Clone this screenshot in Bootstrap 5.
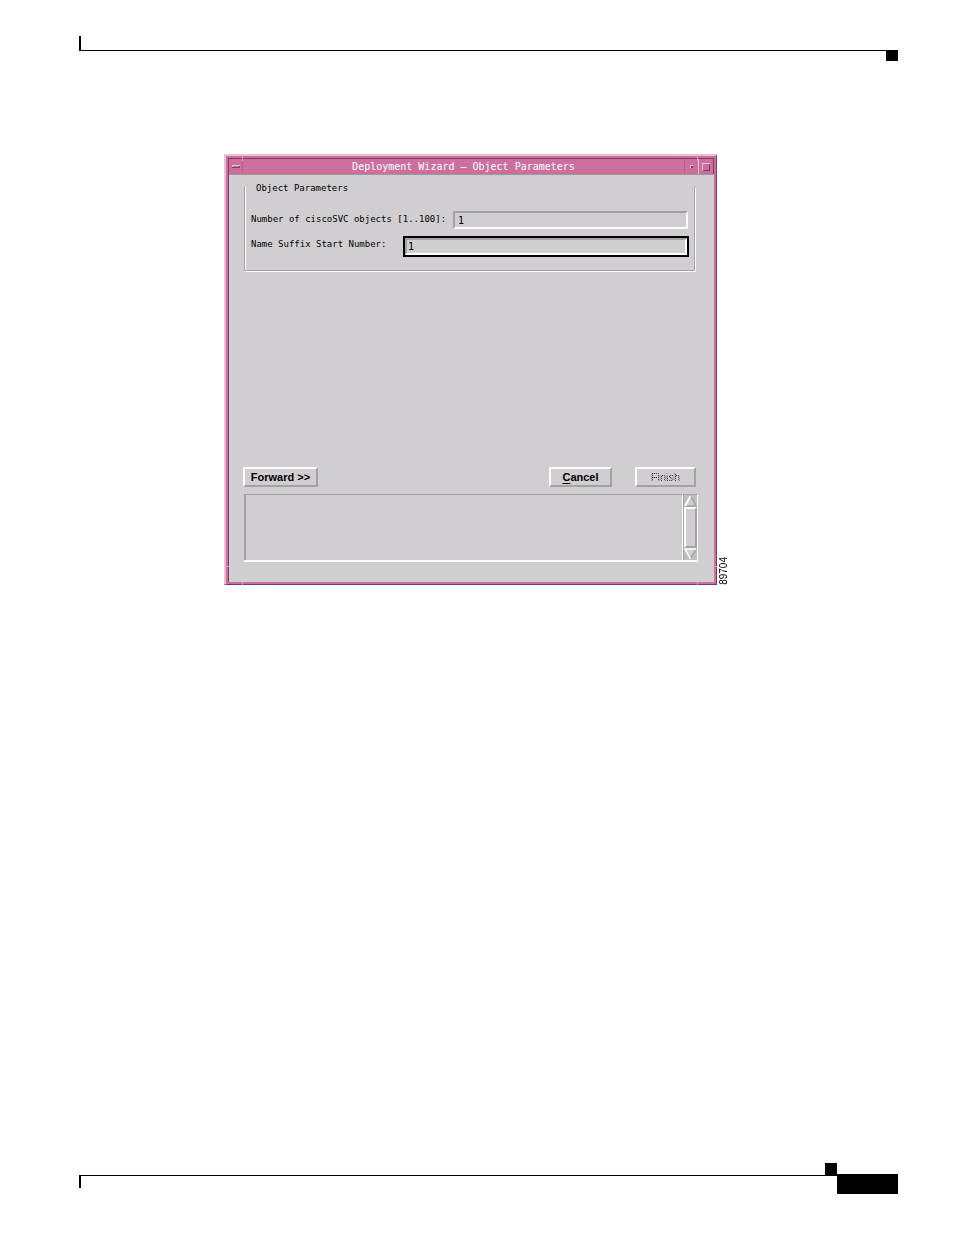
<!DOCTYPE html>
<html lang="en">
<head>
<meta charset="utf-8">
<meta name="viewport" content="width=device-width, initial-scale=1">
<title>Deployment Wizard - Object Parameters</title>
<link href="https://cdn.jsdelivr.net/npm/bootstrap@5.3.0/dist/css/bootstrap.min.css" rel="stylesheet">
<style>
:root{--face:#d1ced1;--lo:#a3a1a3;--hi:#fff;--pink:#cc6f9e;--pink-hi:#e9c0d7;--pink-lo:#7d3c60}
body{background:#fff;color:#000;font-family:"Liberation Sans",Arial,sans-serif}
.sheet{padding:36px 56px 41px 79px}
/* page rules */
.rule-top{height:25px}
.rule-top .tick-line{height:15px;border-left:2px solid #000;border-bottom:1px solid #000}
.block-top{width:12px;height:11px;background:#000}
.rule-foot{height:31px}
.rule-foot .tick-line{height:13px;border-left:2px solid #000;border-top:1px solid #000}
.block-foot{width:12px;height:12px;background:#000}
.page-box{width:61px;height:20px;background:#000}
/* window frame */
.figure-row{padding:93px 168px 0 145px}
.win{border:solid;border-width:2px 1px 1px 2px;border-color:var(--pink-hi) var(--pink-lo) var(--pink-lo) var(--pink-hi);background:var(--pink)}
.win-inner{margin:2px;border-top:1px solid var(--pink-lo);border-left:1px solid var(--pink-lo)}
.win-title{height:16px;border-bottom:1px solid #999;color:#fff;font:10px/15px "DejaVu Sans Mono",monospace}
.win-title h1{font:inherit;line-height:15px}
.tool{height:15px;width:16px;padding:0;border:0;background:none;display:flex;align-items:center;justify-content:center}
.tool-menu{width:14px;border-right:1px solid #b0658c}
.tool-min{border-left:1px solid #b0658c;width:14px}
.tool-max{border-left:1px solid var(--pink-hi);border-right:1px solid var(--pink-lo)}
.notch{position:absolute;background:#dba0c0}
.notch-v{width:1px;height:5px}
.notch-h{width:4px;height:1px}
.win-body{background:var(--face);min-height:407px;padding:12px 16px 20px 14px}
/* parameters */
.mono{font:9px/14px "DejaVu Sans Mono",monospace}
.group{position:relative;height:84px;border:solid var(--lo);border-width:0 1px 1px;margin:0 3px 0 1px;padding:24px 6px 0 6px;box-shadow:1px 1px 0 #fff,inset 1px 0 0 #fff}
.group-name{position:absolute;left:11px;top:-6px;width:auto;margin:0}
.entry{min-width:0;height:18px;padding:0 3px;border:2px solid;border-color:var(--lo) #fff #fff var(--lo);border-radius:0;background:var(--face);color:#000;font:10px/14px "DejaVu Sans Mono",monospace;outline:0}
.entry-focus{border:2px solid #000;height:21px;display:flex;margin-right:-1px}
.entry-focus .entry{flex:1;height:17px;padding:0 1px}
.row-one{height:18px}
.row-two{height:21px;margin-top:7px}
.row-one label,.row-two label{line-height:16px}
.label-one{width:202px}
.label-two{width:152px}
/* buttons */
.push{height:20px;border:2px solid;border-color:#fff var(--lo) var(--lo) #fff;border-radius:0;background:var(--face);color:#000;padding:0;font:bold 11px/16px "Liberation Sans",Arial,sans-serif}
.push-forward{width:75px}
.push-cancel{width:63px;margin-right:23px}
.push-cancel u{text-underline-offset:2px;text-decoration-thickness:1px}
.push-finish{width:61px}
.push-finish span{color:transparent;background:repeating-conic-gradient(#111 0 25%,#aaa 0 50%) 0 0/2px 2px;-webkit-background-clip:text;background-clip:text;font-weight:normal}
.actions{margin-right:2px}
/* message area */
.log{margin:7px 0 0 1px;height:68px;border-bottom:2px solid #fff}
.log textarea{resize:none;overflow:hidden;border:solid;border-width:1px 1px 0 2px;border-color:var(--lo) #fff #fff var(--lo);border-radius:0;background:var(--face);padding:2px;outline:0;font:10px/14px "DejaVu Sans Mono",monospace}
.scroll{width:15px;border-right:1px solid #fff;border-left:1px solid var(--lo);border-top:1px solid var(--lo);background:#bfbdbf}
.scroll button{border:0;padding:0;background:none;height:12px;display:block}
.scroll svg,.tool svg{display:block}
.thumb{border:solid;border-width:2px;border-color:#fff var(--lo) var(--lo) #fff;background:var(--face)}
.art-no{writing-mode:vertical-rl;transform:rotate(180deg);font-size:10px;line-height:12px;margin-left:1px}
</style>
</head>
<body>
<div class="sheet d-flex flex-column min-vh-100">
  <header class="rule-top d-flex">
    <div class="tick-line flex-grow-1"></div>
    <div class="block-top align-self-end"></div>
  </header>

  <main class="figure-row d-flex align-items-end">
    <section class="win position-relative flex-grow-1">
      <div class="win-inner">
        <div class="win-title d-flex">
          <button class="tool tool-menu" type="button" aria-label="Window menu"><svg width="8" height="3"><path d="M0 0h8v1H1v2H0z" fill="#e9c0d7"/><path d="M0 2h7V1h1v2H0z" fill="#7d3c60"/></svg></button>
          <h1 class="flex-grow-1 text-center m-0">Deployment Wizard — Object Parameters</h1>
          <button class="tool tool-min" type="button" aria-label="Minimize"><svg width="3" height="3"><path d="M0 0h3v1H1v2H0z" fill="#e9c0d7"/><path d="M1 1h2v2H1z" fill="#7d3c60"/></svg></button>
          <button class="tool tool-max" type="button" aria-label="Maximize"><svg width="8" height="8"><path d="M0 8V0h8v1H1v7z" fill="#e9c0d7"/><path d="M1 7h6V1h1v7H1z" fill="#7d3c60"/></svg></button>
        </div>
        <form class="win-body d-flex flex-column">
          <fieldset class="group mono">
            <legend class="group-name mono">Object Parameters</legend>
            <div class="row-one d-flex">
              <label class="label-one text-nowrap" for="count">Number of ciscoSVC objects [1..100]:</label>
              <input class="entry flex-grow-1" id="count" type="text" value="1">
            </div>
            <div class="row-two d-flex">
              <label class="label-two text-nowrap" for="suffix">Name Suffix Start Number:</label>
              <div class="entry-focus flex-grow-1"><input class="entry" id="suffix" type="text" value="1"></div>
            </div>
          </fieldset>
          <div class="actions d-flex mt-auto">
            <button class="push push-forward me-auto" type="button">Forward &gt;&gt;</button>
            <button class="push push-cancel" type="button"><u>C</u>ancel</button>
            <button class="push push-finish" type="button" disabled><span>Finish</span></button>
          </div>
          <div class="log d-flex">
            <textarea class="flex-grow-1" aria-label="Messages" readonly></textarea>
            <div class="scroll d-flex flex-column">
              <button type="button" aria-label="Scroll up"><svg width="13" height="12"><path d="M6.500 1L12 11H1z" fill="#d1ced1"/><path d="M6.500 1L12 11H1" stroke="#a3a1a3" stroke-width="1.500" fill="none"/><path d="M6.500 1L1 11" stroke="#fff" stroke-width="2"/></svg></button>
              <div class="thumb flex-grow-1"></div>
              <button type="button" aria-label="Scroll down"><svg width="13" height="12"><path d="M1 1h11L6.500 11z" fill="#d1ced1"/><path d="M12 1L6.500 11" stroke="#a3a1a3" stroke-width="1.500"/><path d="M12 1H1l5.500 10" stroke="#fff" stroke-width="1.500" fill="none"/></svg></button>
            </div>
          </div>
        </form>
      </div>
      <i class="notch notch-v" style="left:16px;top:0"></i>
      <i class="notch notch-v" style="right:18px;top:0"></i>
      <i class="notch notch-v" style="left:16px;bottom:-1px;height:3px"></i>
      <i class="notch notch-v" style="right:18px;bottom:-1px;height:3px"></i>
      <i class="notch notch-h" style="left:-1px;bottom:17px"></i>
      <i class="notch notch-h" style="right:-1px;bottom:17px"></i>
    </section>
    <div class="art-no">89704</div>
  </main>

  <footer class="rule-foot d-flex mt-auto">
    <div class="flex-grow-1">
      <div class="block-foot ms-auto"></div>
      <div class="tick-line"></div>
    </div>
    <div class="page-box mt-auto"></div>
  </footer>
</div>
<script src="https://cdn.jsdelivr.net/npm/bootstrap@5.3.0/dist/js/bootstrap.bundle.min.js"></script>
</body>
</html>
